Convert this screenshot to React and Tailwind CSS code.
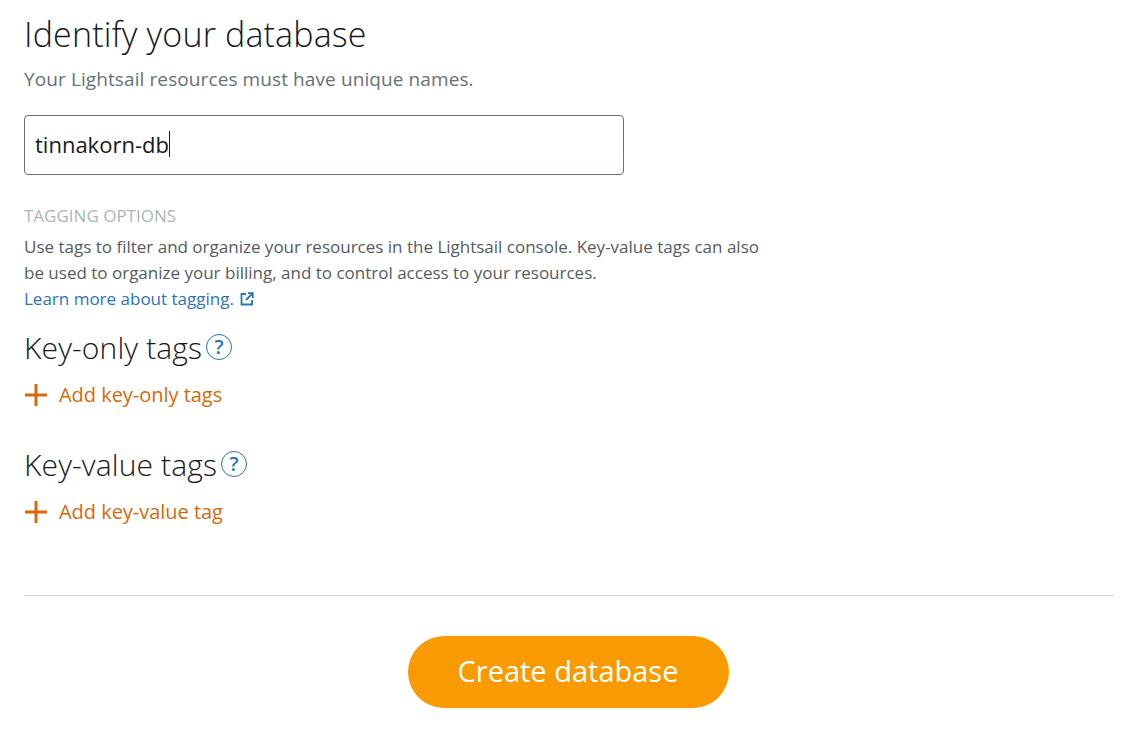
import React from 'react';

const font = "font-['Open_Sans','Noto_Sans',sans-serif]";

const HelpIcon = () => (
  <svg width="28" height="28" viewBox="0 0 28 28" className="ml-[3px]">
    <circle cx="14" cy="14" r="12.5" fill="none" stroke="#2a73be" strokeWidth="1" />
    <text x="14" y="21" textAnchor="middle" fontSize="20" fontWeight="600" fill="#2a73be" fontFamily="Open Sans">?</text>
  </svg>
);

const PlusIcon = () => (
  <svg width="24" height="24" viewBox="0 0 24 24" className="mr-[11px]">
    <path d="M12 1v22M1 12h22" stroke="#d8690a" strokeWidth="3" fill="none" />
  </svg>
);

const TagSection = ({ title, action }) => (
  <div>
    <div className="flex items-center h-[32px]">
      <span className="text-[30px] font-light text-[#16191f] tracking-[0.13px]">{title}</span>
      <HelpIcon />
    </div>
    <div className="flex items-center h-[24px] mt-[20px]">
      <PlusIcon />
      <span className="text-[20px] text-[#d8690a] tracking-[-0.03px]">{action}</span>
    </div>
  </div>
);

export default function App() {
  return (
    <div className={`${font} bg-white h-[735px] px-6 pt-[12px] overflow-hidden`}>
      <h1 className="text-[34px] leading-[44px] font-light text-[#16191f] tracking-[0.15px]">Identify your database</h1>
      <p className="text-[19px] leading-[24px] mt-[11px] text-[#687078] tracking-[0.1px]">Your Lightsail resources must have unique names.</p>

      <div className="w-[600px] h-[60px] mt-[24px] flex items-center px-[10px] pb-[2px] border border-[#687078] rounded-[4px] text-[#16191f] text-[22px]">
        <span>tinnakorn-db</span>
        <span className="w-px h-[26px] bg-[#16191f]"></span>
      </div>

      <div className="mt-[31px] text-[17px] leading-[20px] text-[#aab7b8]">TAGGING OPTIONS</div>
      <p className="mt-[8px] w-[745px] text-[17px] leading-[26px] text-[#545b64]">
        Use tags to filter and organize your resources in the Lightsail console. Key-value tags can also be used to organize your billing, and to control access to your resources.
      </p>
      <a className="flex items-center text-[17px] leading-[26px] text-[#2a73be]">
        Learn more about tagging.
        <svg width="14" height="14" viewBox="0 0 14 14" className="ml-[6px]" fill="none" stroke="#2a73be" strokeWidth="1.8">
          <path d="M6 2H1.5v10.5H12V8" />
          <path d="M8 1.2h4.8V6M12.6 1.4 6 8" />
        </svg>
      </a>

      <div className="mt-[19px]">
        <TagSection title="Key-only tags" action="Add key-only tags" />
      </div>
      <div className="mt-[41px]">
        <TagSection title="Key-value tags" action="Add key-value tag" />
      </div>

      <div className="mt-[71px] w-[1090px] border-t border-[#d5dbdb]"></div>

      <div className="w-[1090px] flex justify-center mt-[40px]">
        <button className="w-[321px] h-[72px] ml-[-2px] pb-[2px] rounded-full bg-[#f89a00] text-white text-[29px]">Create database</button>
      </div>
    </div>
  );
}
